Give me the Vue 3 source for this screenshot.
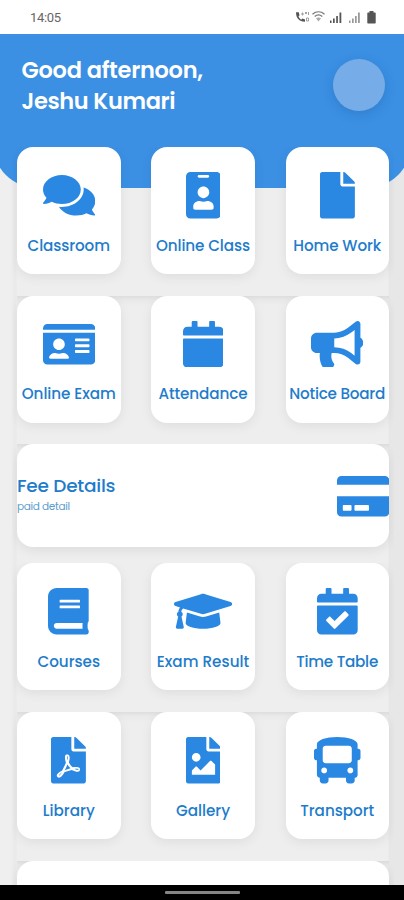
<script setup>
const icons = {
  comments: { w: 576, d: 'M416 192c0-88.4-93.1-160-208-160S0 103.6 0 192c0 34.3 14.1 65.9 38 92-13.4 30.2-35.5 54.2-35.8 54.5-2.2 2.3-2.8 5.7-1.5 8.7S4.8 352 8 352c36.6 0 66.9-12.3 88.7-25 32.2 15.7 70.3 25 111.3 25 114.9 0 208-71.6 208-160zm122 220c23.9-26 38-57.7 38-92 0-66.9-53.5-124.2-129.3-148.1.9 6.6 1.3 13.3 1.3 20.1 0 105.9-107.7 192-240 192-10.8 0-21.3-.8-31.7-1.9C207.8 439.6 281.8 480 368 480c41 0 79.1-9.2 111.3-25 21.8 12.7 52.1 25 88.7 25 3.2 0 6.1-1.9 7.3-4.8 1.3-2.9.7-6.3-1.5-8.7-.3-.3-22.4-24.2-35.8-54.5z' },
  badge: { w: 384, d: 'M336 0H48C21.5 0 0 21.5 0 48v416c0 26.5 21.5 48 48 48h288c26.5 0 48-21.5 48-48V48c0-26.5-21.5-48-48-48zM144 32h96c8.8 0 16 7.2 16 16s-7.2 16-16 16h-96c-8.8 0-16-7.2-16-16s7.2-16 16-16zm48 128c35.3 0 64 28.7 64 64s-28.7 64-64 64-64-28.7-64-64 28.7-64 64-64zm112 236.8c0 10.6-10 19.2-22.4 19.2H102.4C90 416 80 407.4 80 396.8v-19.2c0-31.8 30.1-57.6 67.2-57.6h5c12.3 5.1 25.7 8 39.8 8s27.6-2.9 39.8-8h5c37.1 0 67.2 25.8 67.2 57.6v19.2z' },
  file: { w: 384, d: 'M224 136V0H24C10.7 0 0 10.7 0 24v464c0 13.3 10.7 24 24 24h336c13.3 0 24-10.7 24-24V160H248c-13.2 0-24-10.8-24-24zm160-14.1v6.1H256V0h6.1c6.4 0 12.5 2.5 17 7l97.9 98c4.5 4.5 7 10.6 7 16.9z' },
  card: { w: 576, d: 'M528 32H48C21.5 32 0 53.5 0 80v16h576V80c0-26.5-21.5-48-48-48zM0 432c0 26.5 21.5 48 48 48h480c26.5 0 48-21.5 48-48V128H0v304zm352-232c0-4.4 3.6-8 8-8h144c4.4 0 8 3.6 8 8v16c0 4.4-3.6 8-8 8H360c-4.4 0-8-3.6-8-8v-16zm0 64c0-4.4 3.6-8 8-8h144c4.4 0 8 3.6 8 8v16c0 4.4-3.6 8-8 8H360c-4.4 0-8-3.6-8-8v-16zm0 64c0-4.4 3.6-8 8-8h144c4.4 0 8 3.6 8 8v16c0 4.4-3.6 8-8 8H360c-4.4 0-8-3.6-8-8v-16zM176 192c35.3 0 64 28.7 64 64s-28.7 64-64 64-64-28.7-64-64 28.7-64 64-64zM67.1 396.2C75.5 370.5 99.6 352 128 352h8.2c12.3 5.1 25.7 8 39.8 8s27.6-2.9 39.8-8h8.2c28.4 0 52.5 18.5 60.9 44.2 3.2 9.9-5.2 19.8-15.6 19.8H82.7c-10.4 0-18.8-10-15.6-19.8z' },
  calendar: { w: 448, d: 'M12 192h424c6.6 0 12 5.4 12 12v260c0 26.5-21.5 48-48 48H48c-26.5 0-48-21.5-48-48V204c0-6.6 5.4-12 12-12zm436-44v-36c0-26.5-21.5-48-48-48h-48V12c0-6.6-5.4-12-12-12h-40c-6.6 0-12 5.4-12 12v52H160V12c0-6.6-5.4-12-12-12h-40c-6.6 0-12 5.4-12 12v52H48C21.5 64 0 85.5 0 112v36c0 6.6 5.4 12 12 12h424c6.6 0 12-5.4 12-12z' },
  horn: { w: 576, d: 'M576 240c0-23.63-12.95-44.04-32-55.12V32.01C544 23.26 537.02 0 512 0c-7.12 0-14.19 2.38-19.98 7.02l-85.03 68.03C364.28 109.19 310.66 128 256 128H64c-35.35 0-64 28.65-64 64v96c0 35.35 28.65 64 64 64h33.7c-1.39 10.48-2.18 21.14-2.18 32 0 39.77 9.26 77.35 25.56 110.94 5.19 10.69 16.52 17.06 28.4 17.06h74.28c26.05 0 41.69-29.84 25.9-50.56-16.4-21.52-26.15-48.36-26.15-77.44 0-11.11 1.62-21.79 4.41-32H256c54.66 0 108.28 18.81 150.98 52.95l85.03 68.03a32.023 32.023 0 0 0 19.98 7.02c24.92 0 32-22.78 32-32V295.13C563.05 284.04 576 263.63 576 240zm-96 141.42l-33.05-26.44C392.95 311.78 325.12 288 256 288v-96c69.12 0 136.95-23.78 190.95-66.98L480 98.58v282.84z' },
  credit: { w: 576, d: 'M0 432c0 26.5 21.5 48 48 48h480c26.5 0 48-21.5 48-48V256H0v176zm192-68c0-6.6 5.4-12 12-12h136c6.6 0 12 5.4 12 12v40c0 6.6-5.4 12-12 12H204c-6.6 0-12-5.4-12-12v-40zm-128 0c0-6.6 5.4-12 12-12h72c6.6 0 12 5.4 12 12v40c0 6.6-5.4 12-12 12H76c-6.6 0-12-5.4-12-12v-40zM576 80v48H0V80c0-26.5 21.5-48 48-48h480c26.5 0 48 21.5 48 48z' },
  book: { w: 448, d: 'M448 360V24c0-13.3-10.7-24-24-24H96C43 0 0 43 0 96v320c0 53 43 96 96 96h328c13.3 0 24-10.7 24-24v-16c0-7.5-3.5-14.3-8.9-18.7-4.2-15.4-4.2-59.3 0-74.7 5.4-4.3 8.9-11.1 8.9-18.6zM128 134c0-3.3 2.7-6 6-6h212c3.3 0 6 2.7 6 6v20c0 3.3-2.7 6-6 6H134c-3.3 0-6-2.7-6-6v-20zm0 64c0-3.3 2.7-6 6-6h212c3.3 0 6 2.7 6 6v20c0 3.3-2.7 6-6 6H134c-3.3 0-6-2.7-6-6v-20zm253.4 250H96c-17.7 0-32-14.3-32-32 0-17.6 14.4-32 32-32h285.4c-1.9 17.1-1.9 46.9 0 64z' },
  cap: { w: 640, d: 'M622.34 153.2L343.4 67.5c-15.2-4.67-31.6-4.67-46.79 0L17.66 153.2c-23.54 7.23-23.54 38.36 0 45.59l48.63 14.94c-10.67 13.19-17.23 29.28-17.88 46.9C38.78 266.15 32 276.11 32 288c0 10.78 5.68 19.85 13.86 25.65L20.33 428.53C18.11 438.52 25.71 448 35.94 448h56.11c10.24 0 17.84-9.48 15.62-19.47L82.14 313.65C90.32 307.85 96 298.78 96 288c0-11.57-6.47-21.25-15.66-26.87.76-15.02 8.44-28.3 20.69-36.72L296.6 284.5c9.06 2.78 26.44 6.25 46.79 0l278.95-85.7c23.55-7.24 23.55-38.36 0-45.6zM352.79 315.09c-28.53 8.76-52.84 3.92-65.59 0l-145.02-44.55L128 384c0 35.35 85.96 64 192 64s192-28.65 192-64l-14.18-113.47-145.03 44.56z' },
  check: { w: 448, d: 'M436 160H12c-6.627 0-12-5.373-12-12v-36c0-26.51 21.49-48 48-48h48V12c0-6.627 5.373-12 12-12h40c6.627 0 12 5.373 12 12v52h128V12c0-6.627 5.373-12 12-12h40c6.627 0 12 5.373 12 12v52h48c26.51 0 48 21.49 48 48v36c0 6.627-5.373 12-12 12zM12 192h424c6.627 0 12 5.373 12 12v260c0 26.51-21.49 48-48 48H48c-26.51 0-48-21.49-48-48V204c0-6.627 5.373-12 12-12zm333.296 95.947l-28.169-28.398c-4.667-4.705-12.265-4.736-16.97-.068L194.12 364.665l-45.98-46.352c-4.667-4.705-12.266-4.736-16.971-.068l-28.397 28.17c-4.705 4.667-4.736 12.265-.068 16.97l82.601 83.269c4.667 4.705 12.265 4.736 16.97.068l142.953-141.805c4.705-4.667 4.736-12.265.068-16.97z' },
  pdf: { w: 384, d: 'M181.9 256.1c-5-16-4.9-46.9-2-46.9 8.4 0 7.6 36.9 2 46.9zm-1.7 47.2c-7.7 20.2-17.3 43.3-28.4 62.7 18.3-7 39-17.2 62.9-21.9-12.7-9.6-24.9-23.4-34.5-40.8zM86.1 428.1c0 .8 13.2-5.4 34.9-40.2-6.7 6.3-29.1 24.5-34.9 40.2zM248 160h136v328c0 13.3-10.7 24-24 24H24c-13.3 0-24-10.7-24-24V24C0 10.7 10.7 0 24 0h200v136c0 13.2 10.8 24 24 24zm-8 171.8c-20-12.2-33.3-29-42.7-53.8 4.5-18.5 11.6-46.6 6.2-64.2-4.7-29.4-42.4-26.5-47.8-6.8-5 18.3-.4 44.1 8.1 77-11.6 27.6-28.7 64.6-40.8 85.8-.1 0-.1.1-.2.1-27.1 13.9-73.6 44.5-54.5 68 5.6 6.9 16 10 21.5 10 17.9 0 35.7-18 61.1-61.8 25.8-8.5 54.1-19.1 79-23.2 21.7 11.8 47.1 19.5 64 19.5 29.2 0 31.2-32 19.7-43.4-13.9-13.6-54.3-9.7-73.6-7.2zM377 105L279 7c-4.5-4.5-10.6-7-17-7h-6v128h128v-6.1c0-6.3-2.5-12.4-7-16.9zm-74.1 255.3c4.1-2.7-2.5-11.9-42.8-9 37.1 15.8 42.8 9 42.8 9z' },
  image: { w: 384, d: 'M384 121.941V128H256V0h6.059a24 24 0 0 1 16.97 7.029l97.941 97.941a24.002 24.002 0 0 1 7.03 16.971zM248 160c-13.2 0-24-10.8-24-24V0H24C10.745 0 0 10.745 0 24v464c0 13.255 10.745 24 24 24h336c13.255 0 24-10.745 24-24V160H248zm-135.455 16c26.51 0 48 21.49 48 48s-21.49 48-48 48-48-21.49-48-48 21.491-48 48-48zm208 240h-256l.485-48.485L104.545 328c4.686-4.686 11.799-4.201 16.485.485L160.545 368 264.06 264.485c4.686-4.686 12.284-4.686 16.971 0L320.545 304v112z' },
  bus: { w: 512, d: 'M488 128h-8V80c0-44.8-99.2-80-224-80S32 35.2 32 80v48h-8c-13.25 0-24 10.74-24 24v80c0 13.25 10.75 24 24 24h8v160c0 17.67 14.33 32 32 32v32c0 17.67 14.33 32 32 32h32c17.67 0 32-14.33 32-32v-32h192v32c0 17.67 14.33 32 32 32h32c17.67 0 32-14.33 32-32v-32h6.4c16 0 25.6-12.8 25.6-25.6V256h8c13.25 0 24-10.75 24-24v-80c0-13.26-10.75-24-24-24zM112 400c-17.67 0-32-14.33-32-32s14.33-32 32-32 32 14.33 32 32-14.33 32-32 32zm16-112c-17.67 0-32-14.33-32-32V128c0-17.67 14.33-32 32-32h256c17.67 0 32 14.33 32 32v128c0 17.67-14.33 32-32 32H128zm272 112c-17.67 0-32-14.33-32-32s14.33-32 32-32 32 14.33 32 32-14.33 32-32 32z' }
}

const top = [
  [['Classroom', 'comments', 82.5], ['Online Class', 'badge', 94], ['Home Work', 'file', 88]],
  [['Online Exam', 'card', 94], ['Attendance', 'calendar', 89], ['Notice Board', 'horn', 96]]
]
const bottom = [
  [['Courses', 'book', 62.5], ['Exam Result', 'cap', 92.5], ['Time Table', 'check', 82]],
  [['Library', 'pdf', 52], ['Gallery', 'image', 54], ['Transport', 'bus', 74]]
]

// Spreads the letters so that the text takes the given width.
const vFit = {
  mounted(el, { value }) {
    const natural = el.getBoundingClientRect().width
    const n = el.textContent.length
    const gap = (value - natural) / (n - 1)
    el.style.letterSpacing = gap + 'px'
    el.style.marginRight = -gap + 'px'
  }
}
</script>

<template>
  <div class="phone">
    <div class="status">
      <span v-fit="31" class="time">14:05</span>
      <svg class="indicators" width="84" height="16" viewBox="0 0 84 16">
        <path d="M2 3.2c0 6 3 9 9 9.6v-2.400l-2.600-.8-1.200 1.100c-1.300-.8-2.200-1.900-2.700-3.200l1-1.200-.7-3.100z" fill="#555" />
        <path d="M7 5h3M8.500 3.500v3M11 3l2 2M13 3l-2 2M14.500 3v3M12.500 9h2v3h-2z" stroke="#999" stroke-width=".9" fill="none" />
        <path d="M18.500 5.200c3.600-3 8.400-3 12 0M20.700 7.400c2.300-1.800 5.300-1.800 7.600 0" stroke="#777" stroke-width="1.300" fill="none" />
        <path d="M22 9.200c1.500-1 3.500-1 5 0L24.500 12.500z" fill="#aaa" />
        <path d="M36 11.500h1.500V14H36zM39 9.500h1.700V14H39zM42.200 7h1.700v7h-1.700zM45.500 3.500h1.800V14h-1.800z" fill="#555" />
        <path d="M55 11.500h1.500V14H55zM58 9.500h1.700V14H58zM61 7h1.700v7H61zM64 3.500h1.800V14H64z" fill="#999" />
        <path d="M75.500 2h4v1.500H81q.7 0 .7.700v9.600q0 .7-.7.700h-7q-.7 0-.7-.7V4.200q0-.7.7-.7h1.500z" fill="#555" />
      </svg>
    </div>

    <div class="page">
      <header class="hero">
        <h1 class="greeting">
          <span v-fit="181.5">Good afternoon,</span><br />
          <span v-fit="154">Jeshu Kumari</span>
        </h1>
        <div class="avatar"></div>
      </header>

      <main class="list">
        <div v-for="(row, i) in top" :key="'t' + i" class="row" :class="{ seam: i > 0 }">
          <div v-for="[label, icon, width] in row" :key="label" class="tile">
            <svg class="icon" :viewBox="`0 0 ${icons[icon].w} 512`"><path :d="icons[icon].d" /></svg>
            <span v-fit="width" class="label">{{ label }}</span>
          </div>
        </div>

        <div class="row fee-row seam">
          <div class="fee">
            <div class="fee-text">
              <span v-fit="98.5" class="fee-title">Fee Details</span>
              <span v-fit="53" class="fee-sub">paid detail</span>
            </div>
            <svg class="icon" :viewBox="`0 0 ${icons.credit.w} 512`"><path :d="icons.credit.d" /></svg>
          </div>
        </div>

        <div v-for="(row, i) in bottom" :key="'b' + i" class="row" :class="{ seam: i > 0 }">
          <div v-for="[label, icon, width] in row" :key="label" class="tile">
            <svg class="icon" :viewBox="`0 0 ${icons[icon].w} 512`"><path :d="icons[icon].d" /></svg>
            <span v-fit="width" class="label">{{ label }}</span>
          </div>
        </div>

        <div class="row fee-row seam"><div class="fee"></div></div>
      </main>
    </div>

    <div class="navbar"><div class="pill"></div></div>
  </div>
</template>

<style>
body { background: #eee; }
</style>

<style scoped>
.phone {
  width: 404px;
  height: 900px;
  display: flex;
  flex-direction: column;
  overflow: hidden;
  background: #eee;
  font-family: Poppins, Inter, "Open Sans", sans-serif;
  font-feature-settings: "cv11";
}
.status {
  height: 34px;
  flex: none;
  box-sizing: border-box;
  padding: 0 26px 0 30px;
  display: flex;
  align-items: center;
  justify-content: space-between;
  background: #fff;
}
.time { font: 13px/20px Roboto, sans-serif; color: #666; padding-top: 1px; }
.page {
  flex: 1;
  min-height: 0;
  overflow: hidden;
  background: linear-gradient(90deg, #efefef 0 10px, #e9e9e9 16px, #eee 17px 388px, #e7e7e7 389px);
}
.hero {
  height: 154px;
  margin: 0 -7px -41px;
  box-sizing: border-box;
  padding: 20.5px 26px 0 28.5px;
  display: flex;
  justify-content: space-between;
  background: #3b90e4;
  border-radius: 0 0 44px 44px;
}
.greeting {
  margin: 0;
  color: #fff;
  font-size: 22.5px;
  line-height: 31px;
  font-weight: 600;
  white-space: nowrap;
}
.greeting span { display: inline-block; }
.avatar {
  width: 52px;
  height: 52px;
  margin-top: 4.5px;
  border-radius: 50%;
  background: #76ade9;
  box-shadow: 0 3px 12px rgba(20, 60, 120, .22);
}
.list { padding: 0 15px 0 17px; }
.row {
  height: 148.7px;
  display: grid;
  grid-template-columns: repeat(3, 103.5px);
  justify-content: space-between;
  align-items: start;
  margin: 0 -5px;
  padding: 0 5px;
  box-sizing: border-box;
  overflow: hidden;
}
.seam {
  background: linear-gradient(rgba(0, 0, 0, .07), rgba(0, 0, 0, .02) 4px, transparent 10px) content-box;
}
.tile {
  height: 127px;
  box-sizing: border-box;
  padding-top: 25px;
  display: flex;
  flex-direction: column;
  align-items: center;
  background: #fff;
  border-radius: 16px;
  box-shadow: 0 3px 12px rgba(0, 0, 0, .07);
}
.icon { height: 46.5px; display: block; fill: #2b88e2; }
.label {
  margin-top: 16px;
  color: #1e7ccb;
  font-size: 15.2px;
  line-height: 22px;
  font-weight: 500;
  white-space: nowrap;
}
.fee-row { display: block; height: 119px; }
.fee {
  height: 103px;
  display: flex;
  align-items: center;
  justify-content: space-between;
  background: #fff;
  border-radius: 16px;
  box-shadow: 0 3px 12px rgba(0, 0, 0, .08);
}
.fee-text { display: flex; flex-direction: column; align-items: flex-start; padding-bottom: 4px; }
.fee-title { color: #1e7ccb; font-size: 18.5px; line-height: 27px; font-weight: 500; white-space: nowrap; }
.fee-sub { color: #5b9dcc; font-size: 10.5px; line-height: 16px; white-space: nowrap; }
.navbar {
  height: 15.5px;
  flex: none;
  display: flex;
  align-items: center;
  justify-content: center;
  background: #000;
}
.pill { width: 75px; height: 3px; border-radius: 1px; background: #858585; }
</style>
